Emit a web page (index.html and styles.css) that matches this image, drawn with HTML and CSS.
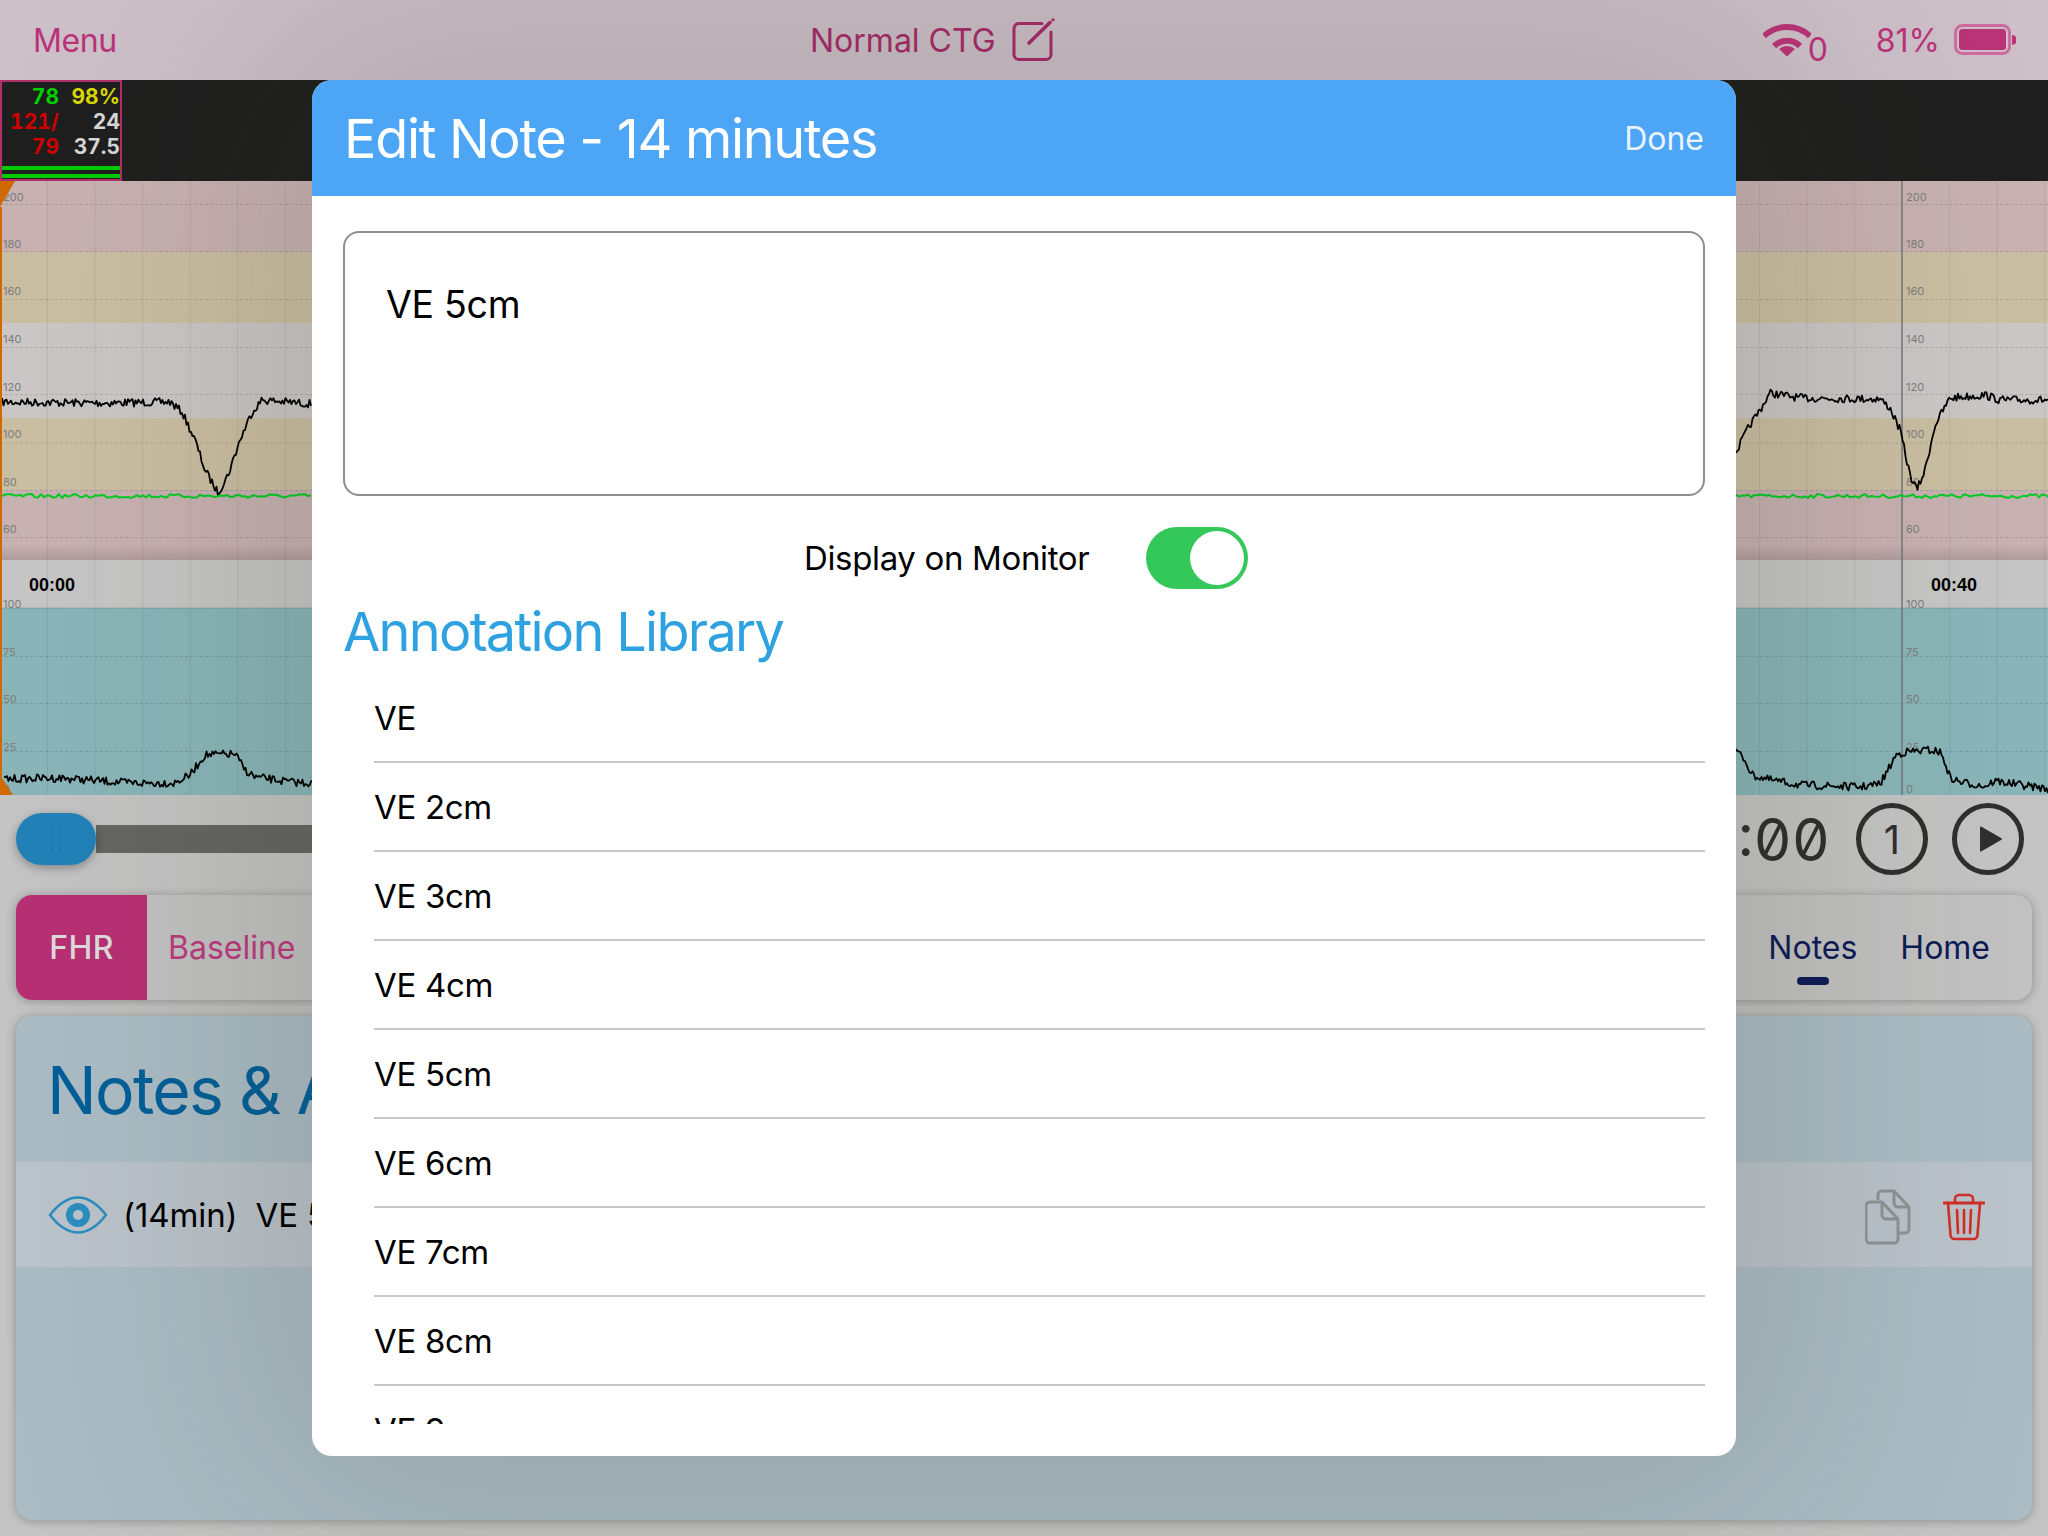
FILE: index.html
```html
<!DOCTYPE html>
<html lang="en">
<head>
<meta charset="UTF-8">
<title>Normal CTG</title>
<link rel="stylesheet" href="styles.css">
</head>
<body>
<header class="topbar">
  <span class="menu">Menu</span>
  <div class="case">
    <span>Normal CTG</span>
    <svg class="edit-icon" viewBox="0 0 44 44" fill="none" stroke="currentColor" stroke-width="3" stroke-linecap="round">
      <path d="M30 6.5H7a5 5 0 0 0-5 5v26a5 5 0 0 0 5 5h27a5 5 0 0 0 5-5V15"/>
      <path d="M17 26L38 5.5" stroke-width="3.6"/>
      <circle cx="41" cy="2.8" r="1.6" fill="currentColor" stroke="none"/>
    </svg>
  </div>
  <div class="status">
    <svg class="wifi-icon" viewBox="0 0 48 36" fill="none" stroke="currentColor" stroke-width="6">
      <path d="M1 15A34 34 0 0 1 47 15"/>
      <path d="M11 25A19 19 0 0 1 37 25"/>
      <path d="M16 28A12 12 0 0 1 32 28L24 35.500Z" fill="currentColor" stroke="none"/>
    </svg>
    <span class="wifi-count">0</span>
    <span class="batt-pct">81%</span>
    <svg class="batt-icon" viewBox="0 0 62 32">
      <rect x="1.500" y="1.500" width="54" height="28" rx="7" fill="none" stroke="#cf6c9f" stroke-width="3"/>
      <rect x="5" y="5" width="47" height="21" rx="3.500" fill="currentColor"/>
      <path d="M58 11a5 5 0 0 1 0 10z" fill="currentColor"/>
    </svg>
  </div>
</header>

<section class="vitals-strip">
  <div class="vitals">
    <div class="vitals-grid">
      <span class="green">78</span><span class="yellow">98%</span>
      <span class="red">121/</span><span class="white">24</span>
      <span class="red">79</span><span class="white">37.5</span>
    </div>
    <div class="signal"></div>
    <div class="signal"></div>
  </div>
</section>

<section class="chart">
  <div class="band pink b1"></div>
  <div class="band tan b2"></div>
  <div class="band grey b3"></div>
  <div class="band tan b4"></div>
  <div class="band pink fade b5"></div>
  <div class="time-strip"></div>
  <div class="band teal b7"></div>
  <svg class="chart-svg" id="chart" viewBox="0 181 2048 614"></svg>
</section>

<section class="controls">
  <div class="thumb"><i></i><i></i></div>
  <div class="track"></div>
  <span class="clock">00:00:00</span>
  <div class="round-btn">1</div>
  <div class="round-btn">
    <svg class="play-icon" viewBox="0 0 24 28"><path d="M2 2.500L22 14 2 25.500Z" fill="currentColor" stroke="currentColor" stroke-width="2" stroke-linejoin="round"/></svg>
  </div>
</section>

<nav class="tabs">
  <div class="tab-fhr">FHR</div>
  <div class="tab-sub">Baseline</div>
  <div class="tab-links">
    <span class="tab-link active">Notes</span>
    <span class="tab-link">Home</span>
  </div>
</nav>

<section class="panel">
  <h2 class="panel-title">Notes &amp; Annotations</h2>
  <div class="note-row">
    <svg class="eye-icon" viewBox="0 0 60 38" fill="none" stroke="currentColor">
      <path d="M2 19C12 6 21 1.500 30 1.500S48 6 58 19C48 32 39 36.500 30 36.500S12 32 2 19Z" stroke-width="2.500"/>
      <circle cx="30" cy="19" r="8.500" stroke-width="7"/>
    </svg>
    <span class="note-time">(14min)</span>
    <span class="note-text">VE 5cm</span>
    <svg class="copy-icon" viewBox="0 0 46 56" fill="none" stroke="currentColor" stroke-width="3" stroke-linejoin="round">
      <path d="M13 11V6a4 4 0 0 1 4-4h12l15 16v22a4 4 0 0 1-4 4h-6"/>
      <path d="M29 2v12a4 4 0 0 0 4 4h11"/>
      <path d="M5 13h12l16 17v20a4 4 0 0 1-4 4H5a4 4 0 0 1-4-4V17a4 4 0 0 1 4-4z"/>
      <path d="M17 13v13a4 4 0 0 0 4 4h12"/>
    </svg>
    <svg class="trash-icon" viewBox="0 0 42 48" fill="none" stroke="currentColor" stroke-width="2.600" stroke-linecap="round">
      <path d="M1 10h40" stroke-width="3"/>
      <path d="M12 10V6a4 4 0 0 1 4-4h10a4 4 0 0 1 4 4v4"/>
      <path d="M5 10l2.500 32a4 4 0 0 0 4 4h19a4 4 0 0 0 4-4L37 10"/>
      <path d="M14 17l1 23M21 17v23M28 17l-1 23"/>
    </svg>
  </div>
</section>

<div class="modal">
  <div class="modal-head">
    <h1>Edit Note - 14 minutes</h1>
    <span class="done">Done</span>
  </div>
  <div class="modal-body">
    <div class="note-box">VE 5cm</div>
    <div class="display-row">
      <span>Display on Monitor</span>
      <div class="switch"><div class="knob"></div></div>
    </div>
    <h2 class="lib-title">Annotation Library</h2>
    <ul class="lib-list" id="lib"></ul>
  </div>
</div>

<script src="script.js"></script>
</body>
</html>
```

FILE: styles.css
```css
*{box-sizing:border-box;margin:0;padding:0;}
html,body{height:1536px;overflow:hidden;}
body{position:relative;font-family:Inter,"Liberation Sans",sans-serif;background:#c4c4c4;color:#000;}

.topbar{height:80px;background:#cdc0c9;color:#bb3378;display:flex;align-items:center;font-size:32px;padding:0 32px 0 33px;}
.menu{width:778px;letter-spacing:-.4px;}
.case{display:flex;align-items:center;gap:16px;color:#a82a6a;width:954px;}
.edit-icon{width:44px;height:44px;margin-top:-3px;}
.status{display:flex;align-items:center;}
.wifi-icon{width:48px;height:36px;margin-top:-3px;}
.wifi-count{margin:18px 0 0 -3px;width:68px;}
.batt-pct{margin-right:14px;}
.batt-icon{width:62px;height:32px;margin-top:-1px;}

.vitals-strip{height:101px;background:#1f1f1f;}
.vitals{width:122px;height:101px;border:2px solid #b0306c;padding-top:2px;}
.vitals-grid{display:grid;grid-template-columns:57px 61px;grid-auto-rows:25px;text-align:right;font-size:21px;font-weight:700;line-height:25px;height:82px;font-variant-numeric:tabular-nums;}
.green{color:#00d000;}
.yellow{color:#d8d800;}
.red{color:#d00000;}
.white{color:#d8d8d8;}
.signal{height:4px;background:#00cc00;margin-bottom:4px;}

.chart{position:relative;height:614px;display:flex;flex-direction:column;}
.pink{background:#c8b2b2;}
.tan{background:#cbbfa3;}
.grey{background:#cbc7c7;}
.teal{background:#8ab6b9;}
.fade{background:linear-gradient(#c8b2b2 78%,#b09c9c);}
.b1{height:71px;}
.b2{height:71px;}
.b3{height:95px;}
.b4{height:72px;}
.b5{height:70px;}
.b7{height:187px;}
.time-strip{height:48px;background:#c6c6c6;}
.chart-svg{position:absolute;left:0;top:0;width:2048px;height:614px;}
.chart-svg text{font-family:Inter,sans-serif;}
.chart-svg .stamp{font-family:"Liberation Sans",sans-serif;font-size:18px;font-weight:700;fill:#000;}
.axis{font-size:11px;fill:#7d7d7d;}

.controls{height:88px;display:flex;align-items:center;padding:0 24px 0 16px;}
.thumb{width:80px;height:52px;border-radius:26px;background:#2282b8;box-shadow:0 3px 10px rgba(0,0,0,.3);display:flex;justify-content:center;gap:7px;padding:12px 0;position:relative;}
.thumb i{width:1px;background:#1f78ab;}
.track{flex:1;height:28px;background:#656563;}
.clock{font-size:59px;font-weight:400;font-feature-settings:"zero","tnum";color:#2f2f2d;margin-right:26px;}
.round-btn{width:72px;height:72px;border:5px solid #2f2f2f;border-radius:50%;display:flex;align-items:center;justify-content:center;font-size:40px;color:#2f2f2f;margin-right:24px;}
.round-btn:last-child{margin-right:0;}
.play-icon{width:24px;height:28px;margin-left:5px;}

.tabs{margin:12px 16px 0;height:105px;background:#c2c2c2;border-radius:16px;box-shadow:0 1px 10px rgba(0,0,0,.28);display:flex;align-items:center;font-size:32px;}
.tab-fhr{width:131px;height:100%;background:#b83074;color:#dcdcdc;border-radius:16px 0 0 16px;display:flex;align-items:center;justify-content:center;font-weight:500;letter-spacing:.4px;}
.tab-sub{color:#bc3a80;margin-left:21px;}
.tab-links{margin-left:auto;display:flex;gap:43px;padding-right:42px;color:#0d1b57;}
.tab-link{position:relative;}
.tab-link.active::after{content:"";position:absolute;left:50%;bottom:-18px;width:32px;height:8px;margin-left:-16px;border-radius:4px;background:#0d1b57;}

.panel{margin:16px 16px 0;height:504px;background:#abbcc5;border-radius:16px;box-shadow:0 1px 10px rgba(0,0,0,.28);}
.panel-title{font-size:66px;font-weight:400;color:#005f99;letter-spacing:-1.700px;line-height:80px;padding:34px 0 0 31px;height:146px;}
.note-row{height:105px;background:#bbc3cb;display:flex;align-items:center;padding:0 47px 0 32px;font-size:33px;letter-spacing:-.1px;}
.eye-icon{width:60px;height:38px;color:#2b8ec0;margin-right:15px;}
.note-time{margin-right:18px;}
.note-text{margin-right:auto;}
.copy-icon{width:46px;height:56px;color:#8f9394;margin-right:32px;margin-top:4px;}
.trash-icon{width:42px;height:48px;color:#d22f27;margin-top:4px;}

.modal{position:absolute;left:312px;top:80px;width:1424px;height:1376px;background:#fff;border-radius:20px;box-shadow:0 0 300px 60px rgba(50,50,30,.17);display:flex;flex-direction:column;overflow:hidden;}
.modal-head{height:116px;flex:none;background:#4da6f5;color:#fff;display:flex;align-items:center;justify-content:space-between;padding:0 32px;}
.modal-head h1{font-size:54px;font-weight:400;letter-spacing:-1.300px;}
.done{font-size:32px;color:#eaf4fe;}
.modal-body{flex:1;min-height:0;padding:35px 31px 32px 31px;display:flex;flex-direction:column;}
.note-box{height:265px;flex:none;border:2px solid #8e8e93;border-radius:16px;padding:49px 41px;font-size:37.500px;line-height:46px;letter-spacing:-.3px;}
.display-row{display:flex;align-items:center;margin:31px 0 0 461px;font-size:33px;letter-spacing:-.35px;}
.switch{width:102px;height:62px;border-radius:31px;background:#34c759;margin-left:57px;padding:4px;display:flex;justify-content:flex-end;}
.knob{width:54px;height:54px;border-radius:50%;background:#fff;}
.lib-title{font-size:54px;font-weight:400;color:#2ea2e0;letter-spacing:-1.700px;line-height:64px;margin-top:11px;}
.lib-list{list-style:none;flex:1;min-height:0;overflow:hidden;margin:10px 0 0 31px;}
.lib-list li{height:89px;flex:none;border-bottom:2px solid #c8c8c8;display:flex;align-items:center;padding-top:1px;font-size:33px;letter-spacing:-.3px;}
```

FILE: script.js
```js
const NS='http://www.w3.org/2000/svg';
const chart=document.getElementById('chart');

function add(tag,attrs,text){
  const el=document.createElementNS(NS,tag);
  for(const k in attrs)el.setAttribute(k,attrs[k]);
  if(text)el.textContent=text;
  chart.appendChild(el);
  return el;
}

// seeded so the traces stay the same on every load
let seed=7;
function rnd(){seed=(seed*16807)%2147483647;return seed/2147483647;}

function yAt(pts,x){
  for(let i=1;i<pts.length;i++){
    if(x<=pts[i][0]){
      const [x0,y0]=pts[i-1],[x1,y1]=pts[i];
      return y0+(y1-y0)*(x-x0)/(x1-x0);
    }
  }
  return pts[pts.length-1][1];
}

function trace(pts,noise,color,width,step){
  const out=[];
  for(let x=pts[0][0];x<=pts[pts.length-1][0];x+=step){
    out.push(x.toFixed(1)+','+(yAt(pts,x)+(rnd()-.5)*noise).toFixed(1));
  }
  add('polyline',{points:out.join(' '),fill:'none',stroke:color,'stroke-width':width,'stroke-linejoin':'round'});
}

// grid
for(let i=1;i<44;i++){
  const x=i*47.55;
  add('line',{x1:x,x2:x,y1:181,y2:795,stroke:'rgba(0,0,0,.07)','stroke-width':1});
}
[204,251,299,347,394,442.5,490,537,656,703,751].forEach(y=>{
  add('line',{x1:0,x2:2048,y1:y+.5,y2:y+.5,stroke:'rgba(0,0,0,.13)','stroke-width':1,'stroke-dasharray':'3 2'});
});
add('line',{x1:0,x2:2048,y1:608,y2:608,stroke:'rgba(0,0,0,.15)','stroke-width':1});
add('line',{x1:1902,x2:1902,y1:181,y2:795,stroke:'#74787c','stroke-width':1.5});

// axis labels
const labels=[['200',201],['180',248],['160',295],['140',343],['120',391],['100',438],['80',486],['60',533],['100',608],['75',656],['50',703],['25',751],['0',798]];
[3,1906].forEach(x=>labels.forEach(([t,y])=>add('text',{x:x,y:y-(t==='0'?5:0),class:'axis'},t)));
add('text',{x:29,y:591,class:'stamp'},'00:00');
add('text',{x:1931,y:591,class:'stamp'},'00:40');

// FHR and maternal traces
trace([[2,402],[100,403],[170,402],[182,412],[195,440],[205,470],[218,493],[228,475],[240,440],[252,412],[262,400],[312,404]],8,'#000',1.8,1.5);
trace([[1736,452],[1750,425],[1760,410],[1770,393],[1800,398],[1880,399],[1890,408],[1900,430],[1910,475],[1917,490],[1925,470],[1935,425],[1950,398],[1985,395],[2000,400],[2048,400]],8,'#000',1.8,1.5);
trace([[2,496],[312,496]],4,'#00cc22',2,3);
trace([[1736,496],[2048,496]],4,'#00cc22',2,3);

// contraction traces
trace([[4,779],[60,778],[130,783],[175,783],[190,775],[205,755],[235,754],[245,770],[255,777],[290,782],[312,783]],8,'#000',1.8,1.5);
trace([[1736,750],[1745,760],[1752,775],[1770,780],[1800,785],[1860,787],[1880,784],[1888,770],[1896,755],[1905,752],[1930,750],[1940,752],[1946,765],[1950,778],[1960,782],[1985,786],[1995,781],[2048,789]],8,'#000',1.8,1.5);

// start marker
add('rect',{x:0,y:207,width:2,height:570,fill:'#d06a00'});
add('polygon',{points:'0,181 15,181 0,207',fill:'#d06a00'});
add('polygon',{points:'0,775 13,795 0,795',fill:'#d06a00'});

// annotation library
const lib=document.getElementById('lib');
['VE','VE 2cm','VE 3cm','VE 4cm','VE 5cm','VE 6cm','VE 7cm','VE 8cm','VE 9cm'].forEach(t=>{
  const li=document.createElement('li');
  li.textContent=t;
  lib.appendChild(li);
});
```
